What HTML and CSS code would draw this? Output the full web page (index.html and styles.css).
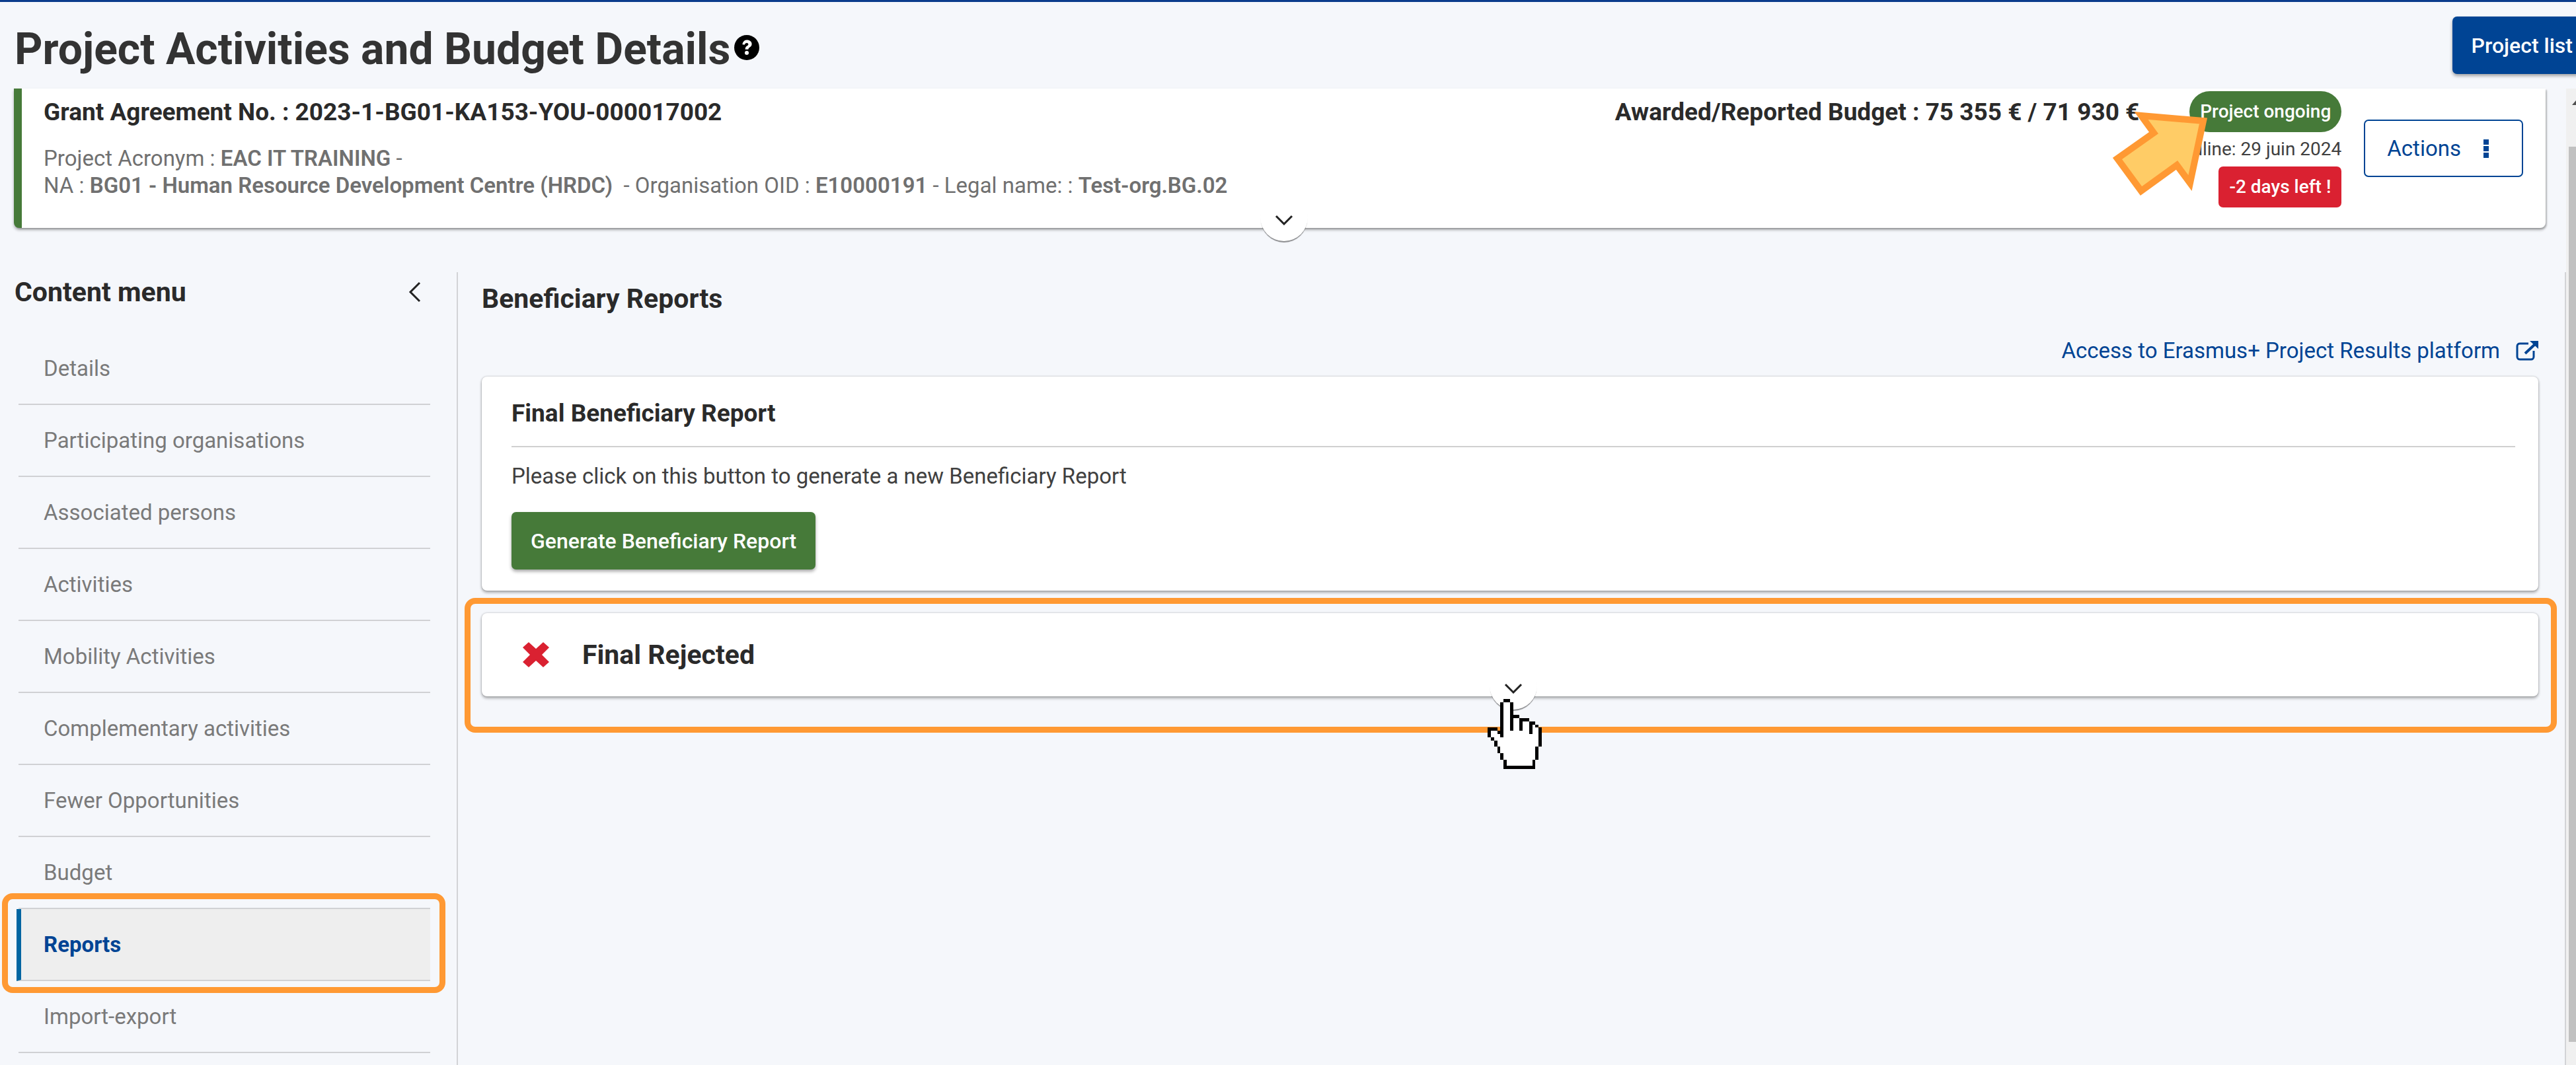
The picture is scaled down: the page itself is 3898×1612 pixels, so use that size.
FILE: index.html
```html
<!DOCTYPE html>
<html lang="en">
<head>
    <meta charset="UTF-8">
    <title>Project Activities and Budget Details</title>
    <link rel="stylesheet" href="styles.css">
</head>
<body>
    <header class="page-header">
        <h1>Project Activities and Budget Details</h1>
        <svg class="help" viewBox="0 0 40 40" aria-label="Help">
            <circle cx="20" cy="20" r="20" fill="#000"/>
            <path d="M13 15c1-5 4-7 7.500-7 4 0 7.500 2.500 7.500 6.500 0 5-5.500 5-5.500 8.500h-5c0-6 5-5.500 5-8 0-1.500-1-2.300-2.500-2.300-1.700 0-2.700 1-3.500 2.800z" fill="#fff"/>
            <circle cx="20" cy="28.500" r="3.200" fill="#fff"/>
        </svg>
        <button type="button" class="btn btn-primary">Project list</button>
    </header>

    <div class="scroll-area">
        <div class="content">
            <section class="card project-card">
                <div class="project-info">
                    <h2>Grant Agreement No. : 2023-1-BG01-KA153-YOU-000017002</h2>
                    <p>Project Acronym : <b>EAC IT TRAINING</b> -</p>
                    <p>NA : <b>BG01 - Human Resource Development Centre (HRDC)</b>&nbsp; - Organisation OID : <b>E10000191</b> - Legal name: : <b>Test-org.BG.02</b></p>
                </div>
                <h2 class="budget">Awarded/Reported Budget : 75 355 € / 71 930 €</h2>
                <div class="status">
                    <span class="badge badge-ongoing">Project ongoing</span>
                    <span class="deadline">Deadline: 29 juin 2024</span>
                    <span class="badge badge-late">-2 days left !</span>
                    <!-- arrow pointing at the status badge -->
                    <svg class="arrow" viewBox="0 0 144 132">
                        <path d="M43 8L137 16L117 110L97 83L43 122L7 73L62 34z" fill="#ffcc66" stroke="#ff9933" stroke-width="10"/>
                    </svg>
                </div>
                <button type="button" class="btn btn-outline">
                    Actions
                    <svg class="dots" viewBox="0 0 8 28"><path d="M0 0h8v8H0zM0 10h8v8H0zM0 20h8v8H0z" fill="#004494"/></svg>
                </button>
                <button type="button" class="toggle" aria-label="Expand">
                    <svg viewBox="0 0 28 16"><path d="M2 2l12 12L26 2" fill="none" stroke="#222" stroke-width="3"/></svg>
                </button>
            </section>

            <div class="columns">
                <nav class="sidebar">
                    <div class="sidebar-head">
                        <h2>Content menu</h2>
                        <button type="button" class="collapse" aria-label="Collapse menu">
                            <svg viewBox="0 0 20 32"><path d="M18 2L4 16l14 14" fill="none" stroke="#222" stroke-width="3"/></svg>
                        </button>
                    </div>
                    <ul>
                        <li><a href="#">Details</a></li>
                        <li><a href="#">Participating organisations</a></li>
                        <li><a href="#">Associated persons</a></li>
                        <li><a href="#">Activities</a></li>
                        <li><a href="#">Mobility Activities</a></li>
                        <li><a href="#">Complementary activities</a></li>
                        <li><a href="#">Fewer Opportunities</a></li>
                        <li><a href="#">Budget</a></li>
                        <li class="active"><a href="#">Reports</a></li>
                        <li><a href="#">Import-export</a></li>
                    </ul>
                </nav>

                <main class="main">
                    <h2>Beneficiary Reports</h2>
                    <a href="#" class="platform-link">
                        Access to Erasmus+ Project Results platform
                        <svg viewBox="0 0 34 30">
                            <path d="M19 4H6a4 4 0 0 0-4 4v16a4 4 0 0 0 4 4h17a4 4 0 0 0 4-4v-9" fill="none" stroke="#004494" stroke-width="3"/>
                            <path d="M14 19L29 5" fill="none" stroke="#004494" stroke-width="4"/>
                            <path d="M21 0h13v12z" fill="#004494"/>
                        </svg>
                    </a>

                    <section class="card report-card">
                        <h3>Final Beneficiary Report</h3>
                        <p>Please click on this button to generate a new Beneficiary Report</p>
                        <button type="button" class="btn btn-success">Generate Beneficiary Report</button>
                    </section>

                    <section class="card rejected-card">
                        <svg class="cross" viewBox="0 0 40 38">
                            <path d="M9 0l11 10L31 0l9 8-11 11 11 11-9 8-11-10L9 38l-9-8 11-11L0 8z" fill="#da2131"/>
                        </svg>
                        <h2>Final Rejected</h2>
                        <button type="button" class="toggle" aria-label="Expand">
                            <svg viewBox="0 0 28 16"><path d="M2 2l12 12L26 2" fill="none" stroke="#222" stroke-width="3"/></svg>
                        </button>
                        <!-- hand cursor, one unit per cursor pixel -->
                        <svg class="cursor" viewBox="0 0 17 22" shape-rendering="crispEdges">
                            <path d="M5 1h2v5h3v1h3v1h2v1h1v6h-1v4h-1v2h-8v-2h-1v-2h-1v-2h-1v-2h-1v-1h-1v-2h4z" fill="#fff"/>
                            <path d="M5 0h2v1h-2zM4 1h1v11h-1zM7 1h1v9h-1zM8 5h2v1h-2zM10 6h1v4h-1zM11 6h2v1h-2zM13 7h1v4h-1zM14 7h1v1h-1zM15 8h1v1h-1zM16 9h1v6h-1zM15 15h1v4h-1zM14 19h1v3h-1zM5 21h9v1h-9zM5 19h1v2h-1zM4 17h1v2h-1zM3 15h1v2h-1zM2 13h1v2h-1zM1 12h1v1h-1zM0 9h1v3h-1zM1 9h2v1h-2zM3 10h1v1h-1z" fill="#000"/>
                        </svg>
                    </section>
                </main>
            </div>
        </div>

        <div class="scrollbar">
            <svg viewBox="0 0 15 88"><path d="M9 25L15 18V25z" fill="#505050"/></svg>
            <div class="thumb"></div>
        </div>
    </div>
</body>
</html>
```
FILE: styles.css
```css
* {
    margin: 0;
    padding: 0;
    box-sizing: border-box;
}

body {
    display: flex;
    flex-direction: column;
    min-height: 100vh;
    overflow: hidden;
    font-family: Roboto, "Liberation Sans", sans-serif;
    font-size: 33px;
    line-height: 40px;
    color: #404040;
    background: #f5f7fb;
}

a {
    color: #004494;
    text-decoration: none;
}

h1, h2, h3 {
    color: #2a2a2a;
    font-weight: 700;
}

h2 {
    font-size: 41px;
    line-height: 44px;
}

h3 {
    font-size: 37px;
    line-height: 42px;
}

/* header */
.page-header {
    display: flex;
    align-items: flex-start;
    height: 134px;
    padding: 22px 0 0 22px;
    border-top: 3px solid #0a3c8c;
    overflow: hidden;
}

.page-header h1 {
    margin-top: 12px;
    font-size: 66px;
    line-height: 76px;
    color: #333;
}

.help {
    width: 38px;
    height: 38px;
    margin: 28px 0 0 6px;
}

/* buttons */
.btn {
    height: 87px;
    border: none;
    border-radius: 7px;
    font-family: inherit;
    font-size: 32px;
    font-weight: 500;
    color: #fff;
    white-space: nowrap;
    cursor: pointer;
}

.btn-primary {
    margin: 0 -24px 0 auto;
    padding: 0 29px;
    background: #004494;
    box-shadow: 0 3px 5px #00000059;
}

.btn-success {
    padding: 0 29px;
    background: #467a39;
    box-shadow: 0 3px 5px #00000059;
}

.btn-outline {
    display: flex;
    align-items: center;
    margin: 47px 0 0 34px;
    padding: 0 50px 0 33px;
    border: 2px solid #004494;
    background: #fff;
    font-size: 33px;
    font-weight: 400;
    color: #004494;
}

.dots {
    width: 8px;
    height: 28px;
    margin-left: 34px;
}

/* body under the header */
.scroll-area {
    display: flex;
    flex: 1;
}

.content {
    display: flex;
    flex-direction: column;
    flex: 1;
}

.card {
    position: relative;
    background: #fff;
    border-radius: 8px;
    box-shadow: 0 3px 4px #0000004d, 0 0 3px #00000040;
}

.project-card {
    display: flex;
    align-items: flex-start;
    margin: 0 31px 67px 21px;
    padding-right: 34px;
    border-left: 12px solid #467a39;
    border-radius: 0 0 8px 8px;
    box-shadow: 0 3px 4px #0000004d, 2px 2px 2px #00000026;
}

.project-card h2 {
    font-size: 37px;
    line-height: 42px;
}

.project-info {
    flex: 1;
    padding: 15px 0 44px 33px;
    color: #707070;
}

.project-info h2 {
    margin-bottom: 28px;
}

.project-info p {
    line-height: 41px;
}

.project-info b {
    font-weight: 600;
}

.budget {
    padding-top: 15px;
}

.status {
    position: relative;
    display: flex;
    flex-direction: column;
    align-items: flex-end;
    gap: 8px;
    width: 306px;
    padding-top: 4px;
    font-size: 28px;
}

.badge {
    padding: 0 16px;
    font-weight: 500;
    line-height: 62px;
    color: #fff;
}

.badge-ongoing {
    border-radius: 31px;
    background: #467a39;
}

.badge-late {
    border-radius: 7px;
    background: #da2131;
}

.deadline {
    line-height: 36px;
    white-space: nowrap;
}

/* half-round handle on the lower edge of a card */
.toggle {
    position: absolute;
    left: 50%;
    bottom: -20px;
    width: 72px;
    height: 72px;
    margin-left: -36px;
    border: none;
    border-radius: 50%;
    background: #fff;
    box-shadow: 0 3px 1px -1px #00000070;
    cursor: pointer;
}

.toggle svg {
    display: block;
    width: 28px;
    height: 16px;
    margin: 8px auto 0;
}

.arrow {
    position: absolute;
    left: -40px;
    top: 33px;
    width: 144px;
    height: 132px;
}

.columns {
    display: flex;
    flex: 1;
}

/* content menu */
.sidebar {
    width: 693px;
    padding: 8px 40px 0 22px;
    border-right: 2px solid #d2d3d6;
}

.sidebar-head {
    display: flex;
    justify-content: space-between;
    align-items: center;
    margin-bottom: 40px;
}

.collapse {
    padding-right: 14px;
    border: none;
    background: none;
    cursor: pointer;
}

.collapse svg {
    display: block;
    width: 20px;
    height: 32px;
}

.sidebar ul {
    margin-left: 6px;
    list-style: none;
}

.sidebar li {
    position: relative;
    border-bottom: 2px solid #d0d1d4;
}

.sidebar li a {
    display: block;
    padding-left: 38px;
    line-height: 107px;
    color: #7a7a7a;
}

.sidebar .active {
    margin-left: -3px;
    border-left: 7px solid #0065a2;
    background: #eee;
}

.sidebar .active a {
    padding-left: 34px;
    font-weight: 700;
    color: #004494;
}

/* orange frames */
.sidebar .active::after,
.rejected-card::after {
    content: "";
    position: absolute;
    border: 9px solid #ff9933;
    border-radius: 16px;
    pointer-events: none;
}

.sidebar .active::after {
    inset: -24px -23px -20px -29px;
}

.rejected-card::after {
    inset: -23px -28px -55px -26px;
}

/* reports */
.main {
    flex: 1;
    padding: 18px 40px 0 36px;
    border-right: 2px solid #d2d3d6;
}

.platform-link {
    display: flex;
    justify-content: flex-end;
    align-items: center;
    gap: 24px;
    margin: 37px 0 19px;
}

.platform-link svg {
    width: 34px;
    height: 30px;
}

.report-card {
    padding: 35px 35px 32px 45px;
}

.report-card h3 {
    padding-bottom: 28px;
    border-bottom: 2px solid #d0d0d0;
}

.report-card p {
    margin: 24px 0 34px;
}

.rejected-card {
    display: flex;
    align-items: center;
    gap: 50px;
    height: 126px;
    margin-top: 34px;
    padding-left: 62px;
}

.cross {
    width: 40px;
    height: 38px;
}

.rejected-card .toggle {
    margin-left: -31px;
}

.cursor {
    position: absolute;
    left: 50%;
    bottom: -110px;
    z-index: 1;
    width: 82px;
    height: 106px;
    margin-left: -34px;
}

/* scrollbar, cut by the window edge */
.scrollbar {
    display: flex;
    flex-direction: column;
    width: 15px;
    padding-bottom: 35px;
    background: #f0f0f0;
}

.scrollbar svg {
    width: 15px;
    height: 88px;
}

.thumb {
    flex: 1;
    margin-left: 4px;
    background: #c1c1c1;
}
```
